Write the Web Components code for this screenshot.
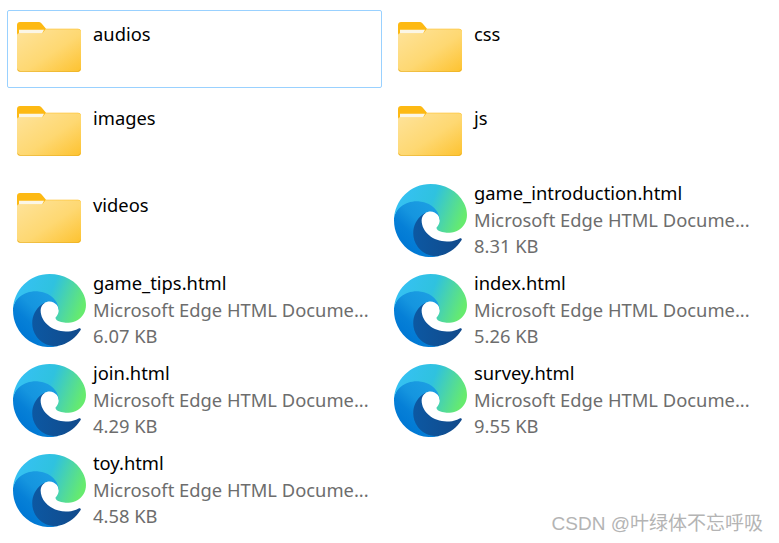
<!DOCTYPE html>
<html lang="zh">
<head>
<meta charset="utf-8">
<title>files</title>
<style>
  html, body { margin: 0; height: 100%; background: #fff; overflow: hidden; }
</style>
</head>
<body>
<file-grid>
  <file-item kind="folder" name="audios" selected></file-item>
  <file-item kind="folder" name="css"></file-item>
  <file-item kind="folder" name="images"></file-item>
  <file-item kind="folder" name="js"></file-item>
  <file-item kind="folder" name="videos"></file-item>
  <file-item kind="html" name="game_introduction.html" size="8.31 KB"></file-item>
  <file-item kind="html" name="game_tips.html" size="6.07 KB"></file-item>
  <file-item kind="html" name="index.html" size="5.26 KB"></file-item>
  <file-item kind="html" name="join.html" size="4.29 KB"></file-item>
  <file-item kind="html" name="survey.html" size="9.55 KB"></file-item>
  <file-item kind="html" name="toy.html" size="4.58 KB"></file-item>
</file-grid>
<water-mark>CSDN @叶绿体不忘呼吸</water-mark>

<script>
class FolderIcon extends HTMLElement {
  connectedCallback() {
    this.attachShadow({ mode: 'open' });
    this.shadowRoot.innerHTML = `
      <style>
        :host { display: block; width: 64px; height: 50px; }
        svg { display: block; }
      </style>
      <svg width="64" height="50" viewBox="0 0 64 51" preserveAspectRatio="none">
        <defs>
          <linearGradient id="front" x1="0" y1="0" x2="1" y2="1">
            <stop offset="0" stop-color="#fee39b"/>
            <stop offset=".55" stop-color="#fed872"/>
            <stop offset="1" stop-color="#fdc22f"/>
          </linearGradient>
        </defs>
        <path d="M3 0h18c1.500 0 2.600.5 3.600 1.500L29 7h32c1.700 0 3 1.300 3 3v6H0V3c0-1.700 1.300-3 3-3z" fill="#fdb913"/>
        <path d="M2 8h25l-2 4H2z" fill="#fbf6e6"/>
        <path d="M2 11.500h23.500L28.500 7.300H61.500c1.400 0 2.500 1.100 2.500 2.500V48c0 1.700-1.300 3-3 3H3c-1.700 0-3-1.300-3-3V13.500c0-1.100.9-2 2-2z" fill="url(#front)"/>
        <path d="M.5 48V47c0 1.700 1.300 3 3 3h57c1.700 0 3-1.300 3-3v1c0 1.400-1.200 2.500-2.500 2.500H3c-1.400 0-2.500-1.100-2.500-2.500z" fill="#e3a91f"/>
      </svg>
    `;
  }
}
customElements.define('folder-icon', FolderIcon);

class EdgeIcon extends HTMLElement {
  connectedCallback() {
    this.attachShadow({ mode: 'open' });
    this.shadowRoot.innerHTML = `
      <style>
        :host { display: block; width: 73px; height: 73px; }
        svg { display: block; }
      </style>
      <svg width="73" height="73" viewBox="0 0 256 256">
        <defs>
          <linearGradient id="e1" gradientUnits="userSpaceOnUse" x1="60" y1="180" x2="236" y2="180">
            <stop offset="0" stop-color="#0c59a4"/>
            <stop offset="1" stop-color="#114a8b"/>
          </linearGradient>
          <linearGradient id="e2" gradientUnits="userSpaceOnUse" x1="150" y1="100" x2="40" y2="220">
            <stop offset="0" stop-color="#1b9de2"/>
            <stop offset=".4" stop-color="#1595df"/>
            <stop offset=".7" stop-color="#0680d7"/>
            <stop offset="1" stop-color="#0078d4"/>
          </linearGradient>
          <linearGradient id="e3" gradientUnits="userSpaceOnUse" x1="30" y1="50" x2="240" y2="130">
            <stop offset="0" stop-color="#35c1f1"/>
            <stop offset=".45" stop-color="#2fc2df"/>
            <stop offset=".75" stop-color="#4fd8a0"/>
            <stop offset="1" stop-color="#66eb6e"/>
          </linearGradient>
        </defs>
        <path fill="url(#e1)" d="M231.800 190.500c-3.400 1.800-6.900 3.400-10.500 4.700-11.500 4.300-23.600 6.500-35.900 6.500-47.300 0-88.500-32.500-88.500-74.300.1-11.400 6.400-21.900 16.400-27.300-42.800 1.800-53.800 46.400-53.800 72.500 0 73.900 68.100 81.400 82.800 81.400 7.900 0 19.800-2.300 27-4.600l1.300-.4c27.600-9.500 51-28.100 66.600-52.800 1.200-1.900.6-4.300-1.200-5.500-1.200-.8-2.700-.9-4-.2z"/>
        <path fill="url(#e2)" d="M105.700 241.400c-8.900-5.500-16.600-12.800-22.700-21.300-26.300-36-18.400-86.500 17.600-112.800 3.800-2.700 7.700-5.200 11.900-7.200 3.100-1.500 8.400-4.100 15.500-4 10.100.1 19.600 4.900 25.700 13 4 5.400 6.300 11.900 6.400 18.700 0-.2 24.500-79.600-80-79.600-43.900 0-80 41.700-80 78.200-.2 19.300 3.900 38.500 12.100 56 27.600 58.900 94.900 87.800 156.600 67.200-21.100 6.600-44.100 3.700-62.900-8.200z"/>
        <path fill="url(#e3)" d="M152.300 148.900c-.8 1.100-3.300 2.600-3.300 5.800 0 2.600 1.700 5.100 4.700 7.200 14.400 10 41.500 8.700 41.600 8.700 10.700 0 21.100-2.900 30.300-8.300 18.800-11 30.300-31.100 30.300-52.900.3-22.400-8-37.300-11.300-43.900C223.300 23.900 177.700 0 128 0 58 0 1 56.200 0 126.200c.5-36.500 36.800-66 80-66 3.500 0 23.500.3 42 10.100 16.300 8.600 24.900 18.900 30.800 29.200 6.200 10.700 7.300 24.200 7.300 29.600 0 5.400-2.700 13.300-7.800 19.800z"/>
      </svg>
    `;
  }
}
customElements.define('edge-icon', EdgeIcon);

class FileItem extends HTMLElement {
  connectedCallback() {
    const kind = this.getAttribute('kind');
    const name = this.getAttribute('name');
    const size = this.getAttribute('size');
    this.attachShadow({ mode: 'open' });

    const icon = kind === 'folder' ? '<folder-icon></folder-icon>' : '<edge-icon></edge-icon>';
    const details = kind === 'folder' ? '' : `
      <div class="sub">Microsoft Edge HTML Docume...</div>
      <div class="sub">${size}</div>`;

    this.shadowRoot.innerHTML = `
      <style>
        :host {
          display: flex;
          box-sizing: border-box;
          height: 78px;
          border: 1px solid transparent;
          border-radius: 2px;
          font-family: "Noto Sans", "Open Sans", sans-serif;
          font-size: 18.35px;
          line-height: 26.5px;
        }
        :host([selected]) { border-color: #99d1ff; }
        .icon { width: 85px; flex: none; box-sizing: border-box; }
        :host([kind="folder"]) .icon { padding: 11px 0 0 9px; }
        :host([kind="html"]) .icon { padding: 2px 0 0 5px; }
        .text { min-width: 0; }
        :host([kind="folder"]) .text { padding-top: 10px; }
        :host([kind="html"]) .text { margin-top: -2px; }
        .name { color: #000; }
        .sub { color: #6d6d6d; }
      </style>
      <div class="icon">${icon}</div>
      <div class="text">
        <div class="name">${name}</div>${details}
      </div>
    `;
  }
}
customElements.define('file-item', FileItem);

class FileGrid extends HTMLElement {
  connectedCallback() {
    this.attachShadow({ mode: 'open' });
    this.shadowRoot.innerHTML = `
      <style>
        :host {
          display: grid;
          grid-template-columns: 375px 391px;
          column-gap: 6px;
          grid-template-rows: 84px 87px 90px 90px 90px 78px;
          padding: 10px 0 0 7px;
        }
      </style>
      <slot></slot>
    `;
  }
}
customElements.define('file-grid', FileGrid);

class WaterMark extends HTMLElement {
  connectedCallback() {
    this.attachShadow({ mode: 'open' });
    this.shadowRoot.innerHTML = `
      <style>
        :host {
          position: absolute;
          right: 16px;
          bottom: 5px;
          color: #b4b4b4;
          font-family: "Liberation Sans", "Noto Sans CJK SC", sans-serif;
          font-size: 19px;
          line-height: 28px;
          white-space: nowrap;
        }
      </style>
      <slot></slot>
    `;
  }
}
customElements.define('water-mark', WaterMark);
</script>
</body>
</html>
